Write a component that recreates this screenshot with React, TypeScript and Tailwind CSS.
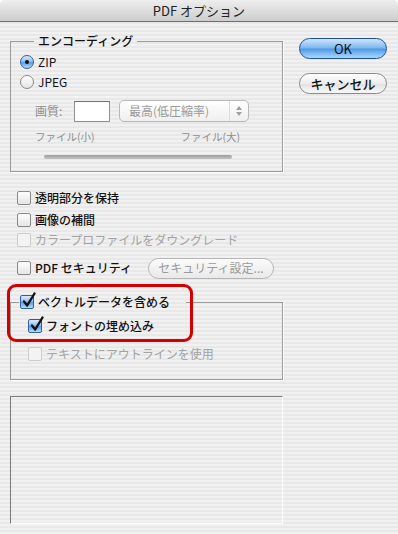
import React from 'react';

const stripes =
  'bg-[image:repeating-linear-gradient(180deg,#f1f1f1_0px,#f1f1f1_2px,#e8e8e8_2px,#e8e8e8_4px)]';

function CheckBox({ checked, disabled }: { checked?: boolean; disabled?: boolean }) {
  const tone = checked
    ? 'border-[#2f5f9e] bg-[image:linear-gradient(to_bottom,#dcecfc,#8fc0f0_45%,#5a9fe8_55%,#b5dcfd)]'
    : disabled
      ? 'border-[#cdcdcd] bg-[#f3f3f3]'
      : 'border-[#8a8a8a] bg-[image:linear-gradient(to_bottom,#ffffff,#e4e4e4)]';
  return (
    <span className={`relative inline-block w-[14px] h-[14px] shrink-0 rounded-[2px] border ${tone}`}>
      {checked && (
        <svg className="absolute left-[1px] -top-[4px]" width="14" height="16" viewBox="0 0 14 16">
          <path d="M2 9.5 L5.2 13.5 L12.5 1.5" stroke="#111" strokeWidth="2.4" fill="none" strokeLinecap="round" strokeLinejoin="round" />
        </svg>
      )}
    </span>
  );
}

function Radio({ selected }: { selected?: boolean }) {
  return (
    <span
      className={`relative inline-flex items-center justify-center w-[14px] h-[14px] shrink-0 rounded-full border ${
        selected
          ? 'border-[#2f5f9e] bg-[image:linear-gradient(to_bottom,#dcecfc,#8fc0f0_45%,#5a9fe8_55%,#b5dcfd)]'
          : 'border-[#8a8a8a] bg-[image:linear-gradient(to_bottom,#ffffff,#e4e4e4)]'
      }`}
    >
      {selected && <span className="w-[4px] h-[4px] rounded-full bg-[#111]" />}
    </span>
  );
}

function Row({ children, className = '' }: { children: React.ReactNode; className?: string }) {
  return <div className={`flex items-center gap-[4px] h-[20px] ${className}`}>{children}</div>;
}

export default function App() {
  return (
    <div className="relative w-[398px] h-[534px] overflow-hidden bg-white font-['Noto_Sans_CJK_JP','Noto_Sans',sans-serif] text-[12px] leading-none text-[#111]">
      <div className={`flex flex-col h-full rounded-t-[5px] overflow-hidden ${stripes}`}>
        {/* title bar */}
        <div className="h-[22px] shrink-0 flex items-center justify-center border-b border-[#6d6d6d] bg-[image:linear-gradient(to_bottom,#eeeeee,#cdcdcd)] text-[13px] text-[#222]">
          PDF オプション
        </div>

        <div className="flex pl-[10px]">
          {/* left column */}
          <div className="w-[273px] flex flex-col">
            <fieldset className="mt-[11px] h-[139px] border border-[#9b9b9b] pl-[9px] pr-[10px] shadow-[1px_1px_0_#fff]">
              <legend className="ml-[14px] px-[4px] h-[16px] leading-[16px] font-medium">エンコーディング</legend>
              <Row className="mt-[3px]">
                <Radio selected />
                <span>ZIP</span>
              </Row>
              <Row>
                <Radio />
                <span>JPEG</span>
              </Row>
              <div className="flex items-center h-[22px] mt-[8px] pl-[15px]">
                <span className="text-[#8e8e8e] w-[39px]">画質:</span>
                <span className="w-[36px] h-[21px] border border-[#8f8f8f] border-t-[#6f6f6f] bg-white" />
                <div className="ml-[9px] w-[130px] h-[22px] flex items-center rounded-[5px] border border-[#b9b9b9] bg-[image:linear-gradient(to_bottom,#ffffff,#efefef)]">
                  <span className="flex-1 pl-[9px] text-[#9a9a9a]">最高(低圧縮率)</span>
                  <span className="w-[19px] h-full flex flex-col items-center justify-center gap-[2px] border-l border-[#dcdcdc]">
                    <svg width="6" height="4" viewBox="0 0 6 4"><path d="M3 0 L6 4 L0 4 Z" fill="#a0a0a0" /></svg>
                    <svg width="6" height="4" viewBox="0 0 6 4"><path d="M0 0 L6 0 L3 4 Z" fill="#a0a0a0" /></svg>
                  </span>
                </div>
              </div>
              <div className="flex justify-between h-[14px] mt-[8px] pl-[15px] pr-[32px] text-[10.5px] leading-[14px] text-[#8e8e8e]">
                <span>ファイル(小)</span>
                <span>ファイル(大)</span>
              </div>
              <div className="mt-[11px] ml-[24px] w-[188px] h-[4px] rounded-full bg-[image:linear-gradient(to_bottom,#9d9d9d,#c4c4c4)]" />
            </fieldset>

            <Row className="mt-[16px] pl-[7px]">
              <CheckBox />
              <span className="font-medium">透明部分を保持</span>
            </Row>
            <Row className="mt-[2px] pl-[7px]">
              <CheckBox />
              <span className="font-medium">画像の補間</span>
            </Row>
            <Row className="pl-[7px]">
              <CheckBox disabled />
              <span className="text-[#a3a3a3]">カラープロファイルをダウングレード</span>
            </Row>
            <div className="flex items-center h-[22px] mt-[7px] pl-[7px] gap-[4px]">
              <CheckBox />
              <span className="font-medium w-[109px]">PDF セキュリティ</span>
              <span className="w-[126px] h-[21px] flex items-center justify-center rounded-full border border-[#b4b4b4] bg-[image:linear-gradient(to_bottom,#fbfbfb,#e9e9e9)] text-[#9a9a9a]">
                セキュリティ設定...
              </span>
            </div>

            <fieldset className="mt-[15px] h-[86px] border border-[#9b9b9b] shadow-[1px_1px_0_#fff]">
              <legend className="ml-[8px] pl-[1px] pr-[16px] h-[16px] flex items-center gap-[4px]">
                <CheckBox checked />
                <span className="font-medium">ベクトルデータを含める</span>
              </legend>
              <Row className="mt-[6px] pl-[17px]">
                <CheckBox checked />
                <span className="font-medium">フォントの埋め込み</span>
              </Row>
              <Row className="mt-[8px] pl-[17px]">
                <CheckBox disabled />
                <span className="text-[#a3a3a3]">テキストにアウトラインを使用</span>
              </Row>
            </fieldset>

            <div className="mt-[16px] h-[128px] border border-t-[#7a7a7a] border-l-[#7a7a7a] border-r-white border-b-white" />
          </div>

          {/* right column */}
          <div className="ml-[16px] flex flex-col gap-[14px] pt-[16px]">
            <button className="w-[88px] h-[21px] rounded-full border border-[#1f4f9a] bg-[image:linear-gradient(to_bottom,#cfe6fb,#7cb6ee_48%,#4f98e6_52%,#a8dafd)] text-[13px] leading-none text-[#111] font-['Noto_Sans_CJK_JP',sans-serif]">
              OK
            </button>
            <button className="w-[88px] h-[21px] rounded-full border border-[#8a8a8a] bg-[image:linear-gradient(to_bottom,#ffffff,#ececec_50%,#e2e2e2_52%,#f8f8f8)] text-[13px] leading-none text-[#111] font-medium font-['Noto_Sans_CJK_JP',sans-serif]">
              キャンセル
            </button>
          </div>
        </div>
      </div>

      {/* red annotation */}
      <div className="absolute left-[7px] top-[284px] w-[186px] h-[58px] rounded-[9px] border-[3px] border-[#d40000]" />
    </div>
  );
}
